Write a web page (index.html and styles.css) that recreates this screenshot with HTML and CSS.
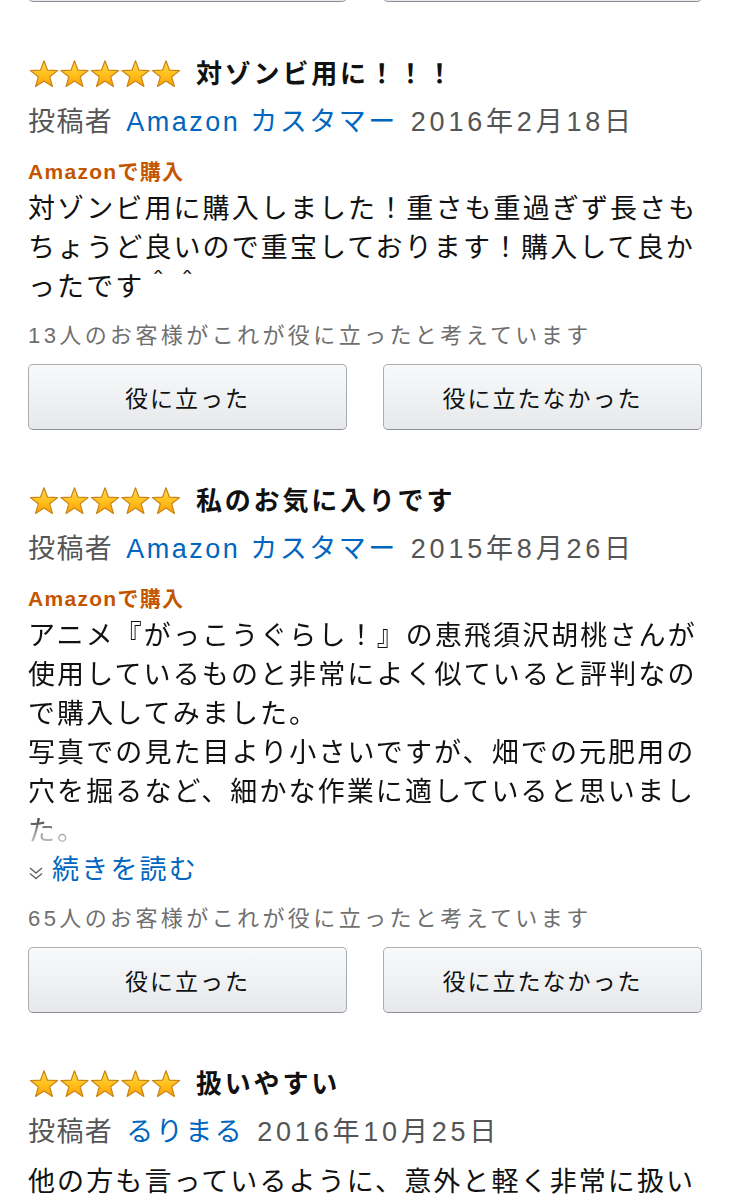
FILE: index.html
```html
<!DOCTYPE html>
<html lang="ja">
<head>
<meta charset="utf-8">
<title>カスタマーレビュー</title>
<link rel="stylesheet" href="styles.css">
</head>
<body>
<svg class="defs" width="0" height="0" aria-hidden="true">
  <defs>
    <linearGradient id="starfill" x1="0" y1="0" x2="0" y2="1">
      <stop offset="0" stop-color="#ffdb4d"/>
      <stop offset="0.55" stop-color="#ffbf1a"/>
      <stop offset="1" stop-color="#ff9f0a"/>
    </linearGradient>
    <polygon id="star" points="15,0.8 18.5,10.2 28.6,10.6 20.7,16.8 23.4,26.5 15,21 6.6,26.5 9.3,16.8 1.4,10.6 11.5,10.2" fill="url(#starfill)" stroke="#c98414" stroke-width="1.2" stroke-linejoin="round"/>
  </defs>
</svg>
<div class="page">
  <div class="actions actions-prev">
    <button class="btn">役に立った</button>
    <button class="btn">役に立たなかった</button>
  </div>

  <section class="review first">
    <h3 class="title">
      <svg class="stars" width="152" height="28" viewBox="0 0 152 28"><use href="#star"/><use href="#star" x="30.5"/><use href="#star" x="61"/><use href="#star" x="91.5"/><use href="#star" x="122"/></svg>
      <span>対ゾンビ用に！！！</span>
    </h3>
    <div class="meta"><span>投稿者</span><a class="author">Amazon カスタマー</a><span class="date">2016年2月18日</span></div>
    <div class="badge">Amazonで購入</div>
    <p class="body">対ゾンビ用に購入しました！重さも重過ぎず長さもちょうど良いので重宝しております！購入して良かったです＾＾</p>
    <div class="helpful">13人のお客様がこれが役に立ったと考えています</div>
    <div class="actions">
      <button class="btn">役に立った</button>
      <button class="btn">役に立たなかった</button>
    </div>
  </section>

  <section class="review">
    <h3 class="title">
      <svg class="stars" width="152" height="28" viewBox="0 0 152 28"><use href="#star"/><use href="#star" x="30.5"/><use href="#star" x="61"/><use href="#star" x="91.5"/><use href="#star" x="122"/></svg>
      <span>私のお気に入りです</span>
    </h3>
    <div class="meta"><span>投稿者</span><a class="author">Amazon カスタマー</a><span class="date">2015年8月26日</span></div>
    <div class="badge">Amazonで購入</div>
    <p class="body clamped">アニメ『がっこうぐらし！』の恵飛須沢胡桃さんが使用しているものと非常によく似ていると評判なので購入してみました。<br>写真での見た目より小さいですが、畑での元肥用の穴を掘るなど、細かな作業に適していると思いました。</p>
    <a class="more"><svg class="chev" width="16" height="16" viewBox="0 0 16 16"><path d="M2 3 L8 8 L14 3 M2 8.5 L8 13.5 L14 8.5" fill="none" stroke="#666" stroke-width="1.5"/></svg><span>続きを読む</span></a>
    <div class="helpful">65人のお客様がこれが役に立ったと考えています</div>
    <div class="actions">
      <button class="btn">役に立った</button>
      <button class="btn">役に立たなかった</button>
    </div>
  </section>

  <section class="review">
    <h3 class="title">
      <svg class="stars" width="152" height="28" viewBox="0 0 152 28"><use href="#star"/><use href="#star" x="30.5"/><use href="#star" x="61"/><use href="#star" x="91.5"/><use href="#star" x="122"/></svg>
      <span>扱いやすい</span>
    </h3>
    <div class="meta"><span>投稿者</span><a class="author">るりまる</a><span class="date">2016年10月25日</span></div>
    <p class="body plain">他の方も言っているように、意外と軽く非常に扱いやすいです。家庭菜園にちょうど良いサイズです。</p>
  </section>
</div>
</body>
</html>
```

FILE: styles.css
```css
html, body {
  margin: 0;
  padding: 0;
  background: #ffffff;
}

body {
  font-family: "Liberation Sans", "Noto Sans CJK JP", sans-serif;
  color: #111111;
  overflow: hidden;
}

.defs {
  display: block;
  width: 0;
  height: 0;
  overflow: hidden;
}

.page {
  padding: 0 27px 0 28px;
}

.actions {
  display: flex;
  gap: 36px;
  margin-top: 13px;
}

.actions-prev {
  margin-top: -64px;
}

.btn {
  flex: 1;
  height: 66px;
  margin: 0;
  padding: 0;
  border: 1px solid #a9acb1;
  border-bottom-color: #8d9096;
  border-radius: 5px;
  background: linear-gradient(to bottom, #f8f9fa 0%, #eef0f2 55%, #e6e8eb 100%);
  box-shadow: inset 0 1px 0 rgba(255, 255, 255, 0.7);
  font-family: "Liberation Sans", "Noto Sans CJK JP", sans-serif;
  font-size: 23px;
  letter-spacing: 2px;
  color: #111111;
}

.review {
  margin-top: 51px;
}

.review.first {
  margin-top: 52px;
}

.title {
  display: flex;
  align-items: center;
  gap: 15px;
  height: 40px;
  margin: 0;
  padding-left: 1px;
  font-size: 26px;
  font-weight: 700;
  letter-spacing: 2.8px;
  line-height: 40px;
  color: #111111;
}

.stars {
  display: block;
  flex: none;
}

.meta {
  display: flex;
  gap: 13px;
  margin-top: 8px;
  font-size: 27px;
  line-height: 40px;
  letter-spacing: 1.4px;
  color: #555555;
  white-space: nowrap;
}

.author {
  color: #0066c0;
  letter-spacing: 2.5px;
}

.date {
  letter-spacing: 3.8px;
}

.badge {
  margin-top: 17px;
  font-size: 21px;
  font-weight: 700;
  line-height: 26px;
  letter-spacing: 1.3px;
  color: #c45500;
}

.body {
  margin: 5px 0 0;
  font-size: 27px;
  line-height: 39px;
  letter-spacing: 2.1px;
  color: #111111;
}

.body.plain {
  margin-top: 11px;
}

.body.clamped {
  -webkit-mask-image: linear-gradient(to bottom, #000 0, #000 calc(100% - 39px), rgba(0, 0, 0, 0.45) calc(100% - 20px), rgba(0, 0, 0, 0.12) 100%);
  mask-image: linear-gradient(to bottom, #000 0, #000 calc(100% - 39px), rgba(0, 0, 0, 0.45) calc(100% - 20px), rgba(0, 0, 0, 0.12) 100%);
}

.more {
  display: flex;
  align-items: center;
  gap: 8px;
  font-size: 27px;
  line-height: 39px;
  letter-spacing: 2.2px;
  color: #0066c0;
}

.chev {
  display: block;
  flex: none;
  margin-top: 4px;
}

.helpful {
  margin-top: 14px;
  font-size: 22px;
  line-height: 30px;
  letter-spacing: 3.4px;
  color: #6f6f6f;
  white-space: nowrap;
}
```
